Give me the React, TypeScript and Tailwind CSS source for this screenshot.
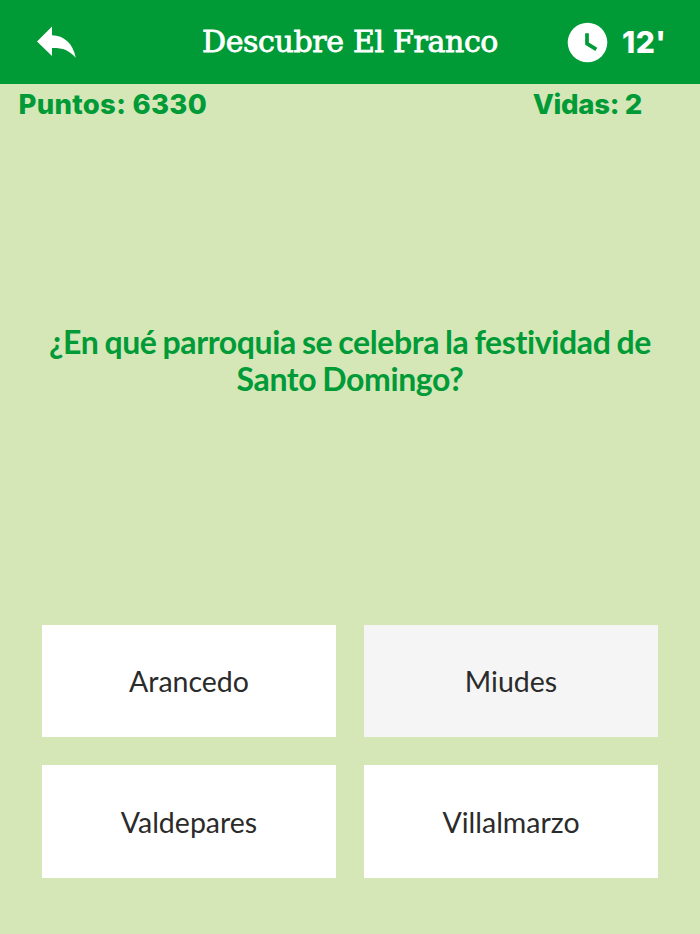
interface Answer {
  label: string;
  pressed?: boolean;
}

const answers: Answer[] = [
  { label: "Arancedo" },
  { label: "Miudes", pressed: true },
  { label: "Valdepares" },
  { label: "Villalmarzo" },
];

export default function App() {
  return (
    <div className="flex h-[934px] w-[700px] flex-col overflow-hidden bg-[#d5e7b7] font-['Lato',sans-serif] [font-variant-ligatures:none]">
      <Header title="Descubre El Franco" time="12'" />
      <div className="flex h-[42px] items-center justify-between pl-[18.5px] pr-[58px] font-['Inter',sans-serif] text-[27.5px] font-extrabold text-[#009b37]">
        <span className="whitespace-nowrap tracking-[0.3px]">Puntos: 6330</span>
        <span className="whitespace-nowrap tracking-[-0.3px]">Vidas: 2</span>
      </div>
      <main className="flex flex-1 flex-col">
        <h2 className="mt-[197px] text-center text-[32px] font-bold leading-[37px] tracking-[-0.38px] text-[#009b37] [word-spacing:-1.4px]">
          <span className="block whitespace-nowrap">¿En qué parroquia se celebra la festividad de</span>
          <span className="block whitespace-nowrap">Santo Domingo?</span>
        </h2>
        <div className="mb-[56.3px] mt-auto grid grid-cols-2 gap-7 px-[42px]">
          {answers.map((a) => (
            <AnswerButton key={a.label} {...a} />
          ))}
        </div>
      </main>
    </div>
  );
}

function Header({ title, time }: { title: string; time: string }) {
  return (
    <header className="grid h-[84px] shrink-0 grid-cols-[150px_400px_150px] items-center bg-[#009b37] text-white">
      <button className="ml-9 w-10" aria-label="Volver">
        <svg className="block h-10 w-10" viewBox="0 0 40 40" fill="currentColor">
          <path d="M1 19.5 16 4.5v8.8C28 13.4 37 21.5 39.8 35.8 33 28 27 25.8 16 25.9V34Z" />
        </svg>
      </button>
      <h1 className="whitespace-nowrap text-center font-['DejaVu_Serif',serif] text-[30px] leading-[40px] tracking-[-0.35px] [-webkit-text-stroke:0.8px_white]">
        {title}
      </h1>
      <div className="ml-[17px] flex items-center gap-[14px]">
        <svg className="h-[41px] w-[41px] shrink-0" viewBox="0 0 41 41" fill="none">
          <circle cx="20.5" cy="20.5" r="19.8" fill="white" />
          <path d="M20 11.3v10.4l9.3 5.6" stroke="#009b37" strokeWidth="3.7" />
        </svg>
        <span className="font-['Inter',sans-serif] text-[30px] font-extrabold leading-[40px] tracking-[0.4px]">{time}</span>
      </div>
    </header>
  );
}

function AnswerButton({ label, pressed }: Answer) {
  return (
    <button
      className={`h-[112.3px] pt-px text-[28.5px] text-[#2b2b2b] ${pressed ? "bg-[#f5f5f5]" : "bg-white"}`}
    >
      {label}
    </button>
  );
}
